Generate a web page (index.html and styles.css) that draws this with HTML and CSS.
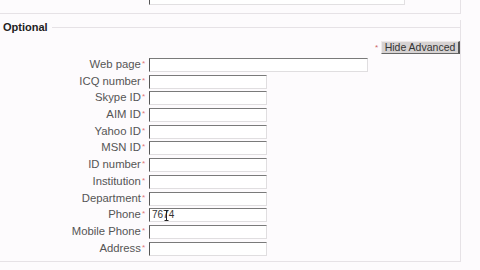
FILE: index.html
```html
<!DOCTYPE html>
<html>
<head>
<meta charset="utf-8">
<link rel="stylesheet" href="styles.css">
</head>
<body>
<div class="page">
  <div class="prev">
    <div class="prev-input"></div>
  </div>
  <div class="fieldset">
    <div class="legend-row">
      <span class="legend">Optional</span>
      <span class="legend-line"></span>
    </div>
    <div class="adv-row">
      <span class="ast">*</span>
      <button class="adv-btn">Hide Advanced</button>
    </div>
    <div class="form">
      <label class="lbl">Web page<span class="ast">*</span></label><div class="field"><span class="inp wide"></span></div>
      <label class="lbl">ICQ number<span class="ast">*</span></label><div class="field"><span class="inp"></span></div>
      <label class="lbl">Skype ID<span class="ast">*</span></label><div class="field"><span class="inp"></span></div>
      <label class="lbl">AIM ID<span class="ast">*</span></label><div class="field"><span class="inp"></span></div>
      <label class="lbl">Yahoo ID<span class="ast">*</span></label><div class="field"><span class="inp"></span></div>
      <label class="lbl">MSN ID<span class="ast">*</span></label><div class="field"><span class="inp"></span></div>
      <label class="lbl">ID number<span class="ast">*</span></label><div class="field"><span class="inp"></span></div>
      <label class="lbl">Institution<span class="ast">*</span></label><div class="field"><span class="inp"></span></div>
      <label class="lbl">Department<span class="ast">*</span></label><div class="field"><span class="inp"></span></div>
      <label class="lbl">Phone<span class="ast">*</span></label><div class="field"><span class="inp val">7674<svg class="ibeam" width="5" height="11" viewBox="0 0 5 11"><path d="M0.5 0.5h4M2.5 0.5v10M0.5 10.5h4" stroke="#222" stroke-width="1" fill="none"/></svg></span></div>
      <label class="lbl">Mobile Phone<span class="ast">*</span></label><div class="field"><span class="inp"></span></div>
      <label class="lbl">Address<span class="ast">*</span></label><div class="field"><span class="inp"></span></div>
    </div>
  </div>
</div>
</body>
</html>
```
FILE: styles.css
```css
html, body {
  margin: 0;
  padding: 0;
  background: #fdfbfd;
}
body {
  font-family: "Liberation Sans", Arial, sans-serif;
  font-size: 11px;
  color: #4a4a4a;
  width: 480px;
  height: 270px;
  overflow: hidden;
}
.page {
  width: 461px;
}
.prev {
  height: 13px;
  border-right: 1px solid #e6e2e6;
  border-bottom: 1px solid #e6e2e6;
}
.prev-input {
  margin-left: 149px;
  width: 254px;
  height: 4px;
  border-left: 1px solid #555;
  border-right: 1px solid #e2e0e2;
  border-bottom: 1px solid #e2e0e2;
  background: #fff;
}
.fieldset {
  margin-top: 6px;
  height: 241px;
  border-right: 1px solid #e6e2e6;
  border-bottom: 1px solid #e6e2e6;
}
.legend-row {
  display: flex;
  align-items: center;
  height: 14px;
}
.legend {
  font-weight: bold;
  color: #222;
  padding-left: 3px;
  padding-right: 4px;
}
.legend-line {
  flex: 1;
  height: 1px;
  background: #e6e2e6;
}
.adv-row {
  display: flex;
  justify-content: flex-end;
  align-items: center;
  margin-top: 7px;
  height: 13px;
}
.adv-row .ast {
  margin-right: 3px;
  font-size: 8px;
  color: #c66;
}
.adv-btn {
  font-family: "Liberation Sans", Arial, sans-serif;
  font-size: 10.5px;
  color: #333;
  background: #d6d2d2;
  border: none;
  border-left: 1px solid #eeeaea;
  border-top: 1px solid #eeeaea;
  border-right: 2px solid #555;
  border-bottom: 1px solid #666;
  height: 13px;
  width: 79px;
  padding: 0;
  line-height: 11px;
}
.form {
  display: grid;
  grid-template-columns: 145px 1fr;
  column-gap: 4px;
  grid-auto-rows: 16.7px;
  margin-top: 4px;
}
.lbl {
  text-align: right;
  line-height: 12px;
  font-size: 11.3px;
  color: #555;
  white-space: nowrap;
}
.lbl .ast {
  font-size: 8px;
  color: #d77;
  vertical-align: 2px;
  margin-left: 1px;
}
.field {
  display: flex;
  align-items: flex-start;
}
.inp {
  display: block;
  position: relative;
  box-sizing: border-box;
  width: 118px;
  height: 14px;
  background: #fff;
  border-top: 1px solid #7a7a7a;
  border-left: 1px solid #555;
  border-right: 1px solid #e0dee0;
  border-bottom: 1px solid #e0dee0;
}
.inp.wide {
  width: 219px;
}
.inp.val {
  font-size: 10px;
  color: #333;
  line-height: 12px;
  padding-left: 2px;
}
.ibeam {
  position: absolute;
  left: 14px;
  top: 1px;
}
```
